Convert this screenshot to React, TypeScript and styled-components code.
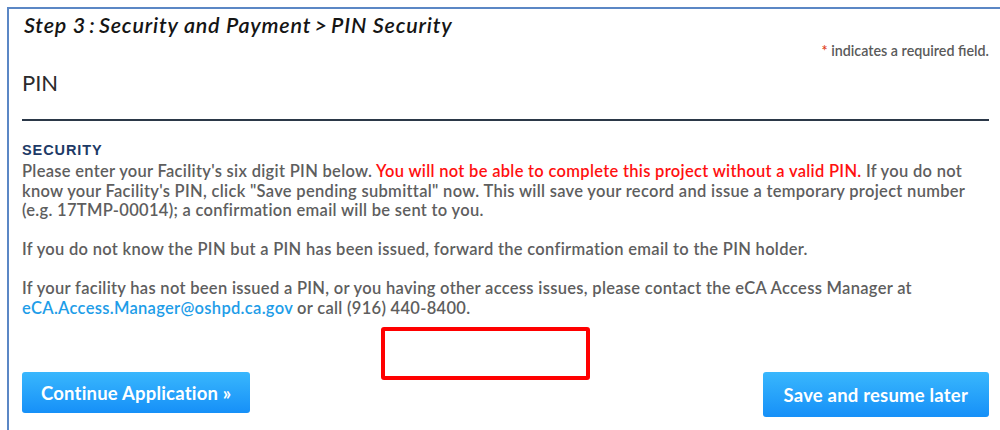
import React from 'react';
import styled, { createGlobalStyle } from 'styled-components';

const GlobalStyle = createGlobalStyle`
  html, body {
    margin: 0;
    padding: 0;
    background: #fff;
  }
  body {
    font-family: Lato, "Open Sans", Arial, sans-serif;
  }
`;

const Page = styled.div`
  width: 1000px;
  height: 430px;
  overflow: hidden;
  padding: 7px 0 0 7px;
  box-sizing: border-box;
`;

const Panel = styled.div`
  border-top: 2px solid #5b87c5;
  border-left: 2px solid #5b87c5;
  height: 100%;
  padding: 2px 11px 0 13px;
  box-sizing: border-box;
`;

const StepTitle = styled.h1`
  margin: 0 0 0 2px;
  font-family: Lato, "Open Sans", sans-serif;
  font-style: italic;
  font-weight: 600;
  font-size: 21.5px;
  letter-spacing: 0.8px;
  line-height: 28px;
  color: #151515;
`;

const RequiredNote = styled.div`
  text-align: right;
  font-size: 14.3px;
  font-weight: 600;
  color: #5a5a5a;
  margin-top: 3px;
  line-height: 18px;
`;

const Star = styled.span`
  color: #e0401a;
`;

const SectionHeading = styled.h2`
  margin: 10px 0 0;
  font-size: 22px;
  font-weight: 400;
  color: #2b2b2b;
  line-height: 26px;
  padding-bottom: 23px;
  border-bottom: 2px solid #2b3848;
`;

const Body = styled.div`
  padding-top: 21px;
`;

const Label = styled.div`
  font-family: "Liberation Sans", Arial, sans-serif;
  font-weight: 700;
  font-size: 14.5px;
  letter-spacing: 0.9px;
  color: #1d3a66;
  line-height: 17px;
  margin-bottom: 3px;
`;

const Para = styled.p`
  margin: 0 0 19.5px;
  font-size: 16.5px;
  font-weight: 600;
  letter-spacing: 0.3px;
  line-height: 19.5px;
  color: #5e5e5e;
  &:last-of-type {
    margin-bottom: 0;
  }
`;

const Warn = styled.span`
  color: #ff1010;
`;

const MailLink = styled.a`
  color: #1e9de8;
  text-decoration: none;
`;

const ButtonRow = styled.div`
  position: relative;
  display: flex;
  justify-content: space-between;
  align-items: flex-start;
  margin-top: 9px;
  padding-top: 45px;
`;

/* red outline drawn over the empty spot between the two buttons */
const Highlight = styled.div`
  position: absolute;
  left: 359px;
  top: 0;
  width: 201px;
  height: 45px;
  border: 4px solid #ff0000;
  border-radius: 3px;
`;

const Button = styled.button<{ $tall?: boolean }>`
  height: ${p => (p.$tall ? 45 : 41)}px;
  padding: 0 ${p => (p.$tall ? 21 : 19)}px;
  border: none;
  border-radius: 3px;
  background: linear-gradient(#39b7fd, #1690f8);
  color: #fff;
  font-family: Lato, "Open Sans", sans-serif;
  font-weight: 700;
  font-size: 18.5px;
  letter-spacing: 0.2px;
  cursor: pointer;
`;

export default function App() {
  return (
    <>
      <GlobalStyle />
      <Page>
        <Panel>
          <StepTitle>Step 3{'\u2009'}:{'\u2009'}Security and Payment{'\u2009'}&gt;{'\u2009'}PIN Security</StepTitle>
          <RequiredNote>
            <Star>*</Star> indicates a required field.
          </RequiredNote>
          <SectionHeading>PIN</SectionHeading>
          <Body>
            <Label>SECURITY</Label>
            <Para>
              Please enter your Facility's six digit PIN below.{' '}
              <Warn>You will not be able to complete this project without a valid PIN.</Warn> If you
              do not know your Facility's PIN, click "Save pending submittal" now. This will save
              your record and issue a temporary project number (e.g. 17TMP-00014); a confirmation
              email will be sent to you.
            </Para>
            <Para>
              If you do not know the PIN but a PIN has been issued, forward the confirmation email to
              the PIN holder.
            </Para>
            <Para>
              If your facility has not been issued a PIN, or you having other access issues, please
              contact the eCA Access Manager at{' '}
              <MailLink href="#">eCA.Access.Manager@oshpd.ca.gov</MailLink> or call (916) 440-8400.
            </Para>
            <ButtonRow>
              <Button>Continue Application »</Button>
              <Highlight />
              <Button $tall>Save and resume later</Button>
            </ButtonRow>
          </Body>
        </Panel>
      </Page>
    </>
  );
}
